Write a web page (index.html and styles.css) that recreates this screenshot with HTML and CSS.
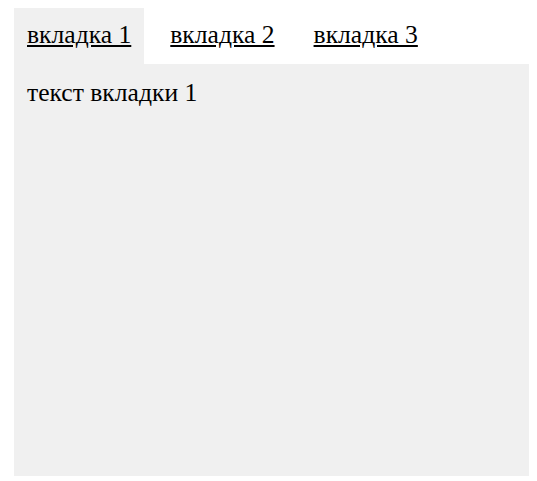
FILE: index.html
```html
<!DOCTYPE html>
<html lang="ru">
<head>
<meta charset="utf-8">
<link rel="stylesheet" href="styles.css">
</head>
<body>
<div class="tabs">
  <div class="tab-bar">
    <a class="tab active" href="#">вкладка 1</a>
    <a class="tab" href="#">вкладка 2</a>
    <a class="tab" href="#">вкладка 3</a>
  </div>
  <div class="panel">текст вкладки 1</div>
</div>
</body>
</html>
```
FILE: styles.css
```css
html, body {
  margin: 0;
  background: #fff;
}
body {
  padding: 8px 8px 5px 14px;
  font-family: "Liberation Serif", "Times New Roman", serif;
  font-size: 25.6px;
  color: #000;
}
.tab-bar {
  display: flex;
  gap: 13px;
}
.tab {
  display: block;
  height: 56px;
  box-sizing: border-box;
  padding: 12px 13px 0 13px;
  color: #000;
  text-decoration: underline;
}
.tab.active {
  background: #f0f0f0;
}
.panel {
  background: #f0f0f0;
  height: 412px;
  box-sizing: border-box;
  padding: 14px 13px;
}
```
